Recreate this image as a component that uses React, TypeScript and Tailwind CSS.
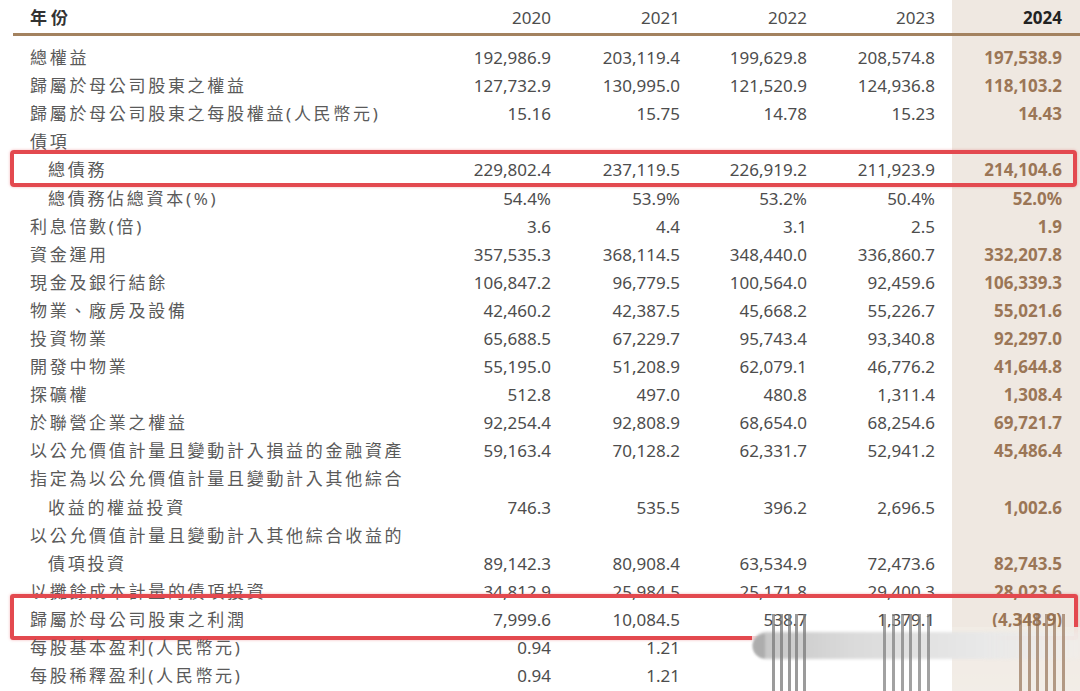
import React from "react";

type Row = { label: string; v: string[]; indent?: boolean; box?: 1 | 2 };

const rows: Row[] = [
  { label: "總權益", v: ["192,986.9", "203,119.4", "199,629.8", "208,574.8", "197,538.9"] },
  { label: "歸屬於母公司股東之權益", v: ["127,732.9", "130,995.0", "121,520.9", "124,936.8", "118,103.2"] },
  { label: "歸屬於母公司股東之每股權益(人民幣元)", v: ["15.16", "15.75", "14.78", "15.23", "14.43"] },
  { label: "債項", v: [] },
  { label: "總債務", indent: true, box: 1, v: ["229,802.4", "237,119.5", "226,919.2", "211,923.9", "214,104.6"] },
  { label: "總債務佔總資本(%)", indent: true, v: ["54.4%", "53.9%", "53.2%", "50.4%", "52.0%"] },
  { label: "利息倍數(倍)", v: ["3.6", "4.4", "3.1", "2.5", "1.9"] },
  { label: "資金運用", v: ["357,535.3", "368,114.5", "348,440.0", "336,860.7", "332,207.8"] },
  { label: "現金及銀行結餘", v: ["106,847.2", "96,779.5", "100,564.0", "92,459.6", "106,339.3"] },
  { label: "物業、廠房及設備", v: ["42,460.2", "42,387.5", "45,668.2", "55,226.7", "55,021.6"] },
  { label: "投資物業", v: ["65,688.5", "67,229.7", "95,743.4", "93,340.8", "92,297.0"] },
  { label: "開發中物業", v: ["55,195.0", "51,208.9", "62,079.1", "46,776.2", "41,644.8"] },
  { label: "探礦權", v: ["512.8", "497.0", "480.8", "1,311.4", "1,308.4"] },
  { label: "於聯營企業之權益", v: ["92,254.4", "92,808.9", "68,654.0", "68,254.6", "69,721.7"] },
  { label: "以公允價值計量且變動計入損益的金融資產", v: ["59,163.4", "70,128.2", "62,331.7", "52,941.2", "45,486.4"] },
  { label: "指定為以公允價值計量且變動計入其他綜合", v: [] },
  { label: "收益的權益投資", indent: true, v: ["746.3", "535.5", "396.2", "2,696.5", "1,002.6"] },
  { label: "以公允價值計量且變動計入其他綜合收益的", v: [] },
  { label: "債項投資", indent: true, v: ["89,142.3", "80,908.4", "63,534.9", "72,473.6", "82,743.5"] },
  { label: "以攤餘成本計量的債項投資", v: ["34,812.9", "25,984.5", "25,171.8", "29,400.3", "28,023.6"] },
  { label: "歸屬於母公司股東之利潤", box: 2, v: ["7,999.6", "10,084.5", "538.7", "1,379.1", "(4,348.9)"] },
  { label: "每股基本盈利(人民幣元)", v: ["0.94", "1.21", "", "", ""] },
  { label: "每股稀釋盈利(人民幣元)", v: ["0.94", "1.21", "", "", ""] },
];

const grid = "grid grid-cols-[423px_128px_129px_127px_128px_127px] items-center";

function Bars({ n, cls }: { n: number; cls: string }) {
  return (
    <>
      {Array.from({ length: n }).map((_, i) => (
        <div key={i} className={cls} />
      ))}
    </>
  );
}

export default function App() {
  return (
    <div
      className="relative w-[1080px] h-[691px] overflow-hidden bg-[linear-gradient(to_right,#ffffff_952px,#efe8e1_952px)] text-[17px] text-[#4d4d4d]"
      style={{ fontFamily: "'Noto Sans', 'Noto Sans CJK TC', sans-serif" }}
    >
      {/* header */}
      <div className={`${grid} h-[33px] pt-[2px]`}>
        <div className="pl-[30px] font-bold text-[#333] tracking-[4px]">年份</div>
        <div className="text-right">2020</div>
        <div className="text-right">2021</div>
        <div className="text-right">2022</div>
        <div className="text-right">2023</div>
        <div className="text-right font-bold text-[#222]">2024</div>
      </div>
      <div className="ml-[13px] h-[3px] bg-[#a3825f]" />
      <div className="h-[8px]" />

      {rows.map((r, i) => (
        <div key={i} className={`${grid} relative h-[28.1px] leading-[28px]`}>
          <div
            className={`${r.indent ? "pl-[48px]" : "pl-[30px]"} whitespace-nowrap tracking-[2.7px] text-[#5a5a5a]`}
          >
            {r.label}
          </div>
          {[0, 1, 2, 3].map((k) => (
            <div key={k} className="text-right">
              {r.v[k] ?? ""}
            </div>
          ))}
          <div className="text-right font-bold text-[#9b7656]">{r.v[4] ?? ""}</div>
          {r.box === 1 && (
            <div className="absolute left-[10px] right-[3px] top-[-6px] bottom-[-3px] border-[4px] border-[#e3494f] rounded-[4px] shadow-[0_0_3px_rgba(227,73,79,0.4)]" />
          )}
          {r.box === 2 && (
            <div className="absolute left-[10px] right-[2px] top-[-12px] bottom-[-6px] border-[4px] border-[#e3494f] rounded-[3px] shadow-[0_0_3px_rgba(227,73,79,0.4)]" />
          )}
        </div>
      ))}

      {/* blurred watermark smear at bottom right */}
      <div className="pointer-events-none absolute left-[752px] top-[627px] w-[328px] h-[64px] bg-[linear-gradient(to_bottom,rgba(255,255,255,0.7),rgba(255,255,255,0.9))]" />
      <div className="pointer-events-none absolute left-[952px] top-[627px] w-[128px] h-[64px] bg-[#efe8e1]/80" />
      <div className="pointer-events-none absolute left-[753px] top-[632px] w-[327px] h-[27px] rounded-l-full bg-[linear-gradient(to_right,#c4c4c4,#dadada_30%,#e8e8e8_70%,rgba(240,240,240,0.3))] blur-[1.5px]" />
      <div className="pointer-events-none absolute left-[753px] top-[634px] w-[12px] h-[24px] rounded-l-full bg-[#adadad] blur-[1px]" />
      <div className="pointer-events-none absolute left-[772px] top-[614px] w-[34px] h-[77px] flex justify-between">
        <Bars n={5} cls="w-[3px] h-full bg-[#7a7a7a]/75 blur-[0.7px]" />
      </div>
      <div className="pointer-events-none absolute left-[883px] top-[614px] w-[47px] h-[77px] flex justify-between">
        <Bars n={6} cls="w-[3px] h-full bg-[#7a7a7a]/70 blur-[0.7px]" />
      </div>
      <div className="pointer-events-none absolute left-[1019px] top-[614px] w-[46px] h-[77px] flex justify-between">
        <Bars n={6} cls="w-[3px] h-full bg-[#8f6c4e]/65 blur-[0.7px]" />
      </div>
    </div>
  );
}
